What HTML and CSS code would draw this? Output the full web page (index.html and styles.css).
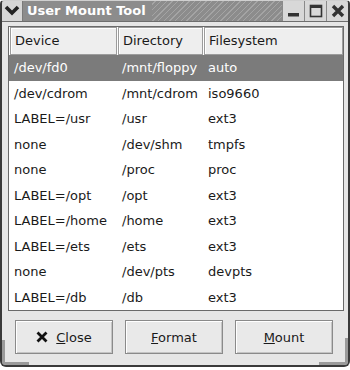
FILE: index.html
```html
<!DOCTYPE html>
<html lang="en">
    <head>
        <meta charset="UTF-8">
        <title>User Mount Tool</title>
        <link rel="stylesheet" href="styles.css">
    </head>
    <body>
        <div class="janela">
            <div class="titulo">
                <div class="menu-btn">
                    <svg width="16" height="12" viewBox="0 0 16 12"><polyline points="2,2 8,8 14,2" fill="none" stroke="#222" stroke-width="3.6"/></svg>
                </div>
                <div class="nome">User Mount Tool</div>
                <div class="listras"></div>
                <div class="tb-btn">
                    <svg width="14" height="14" viewBox="0 0 14 14"><rect x="1" y="9" width="11" height="3.5" fill="#333"/></svg>
                </div>
                <div class="tb-btn">
                    <svg width="14" height="14" viewBox="0 0 14 14"><rect x="1.5" y="1.5" width="11" height="11" fill="none" stroke="#333" stroke-width="1.6"/><rect x="1" y="1" width="12" height="3" fill="#333"/></svg>
                </div>
                <div class="tb-btn">
                    <svg width="14" height="14" viewBox="0 0 14 14"><path d="M2 2 L12 12 M12 2 L2 12" stroke="#333" stroke-width="3.4"/></svg>
                </div>
            </div>
            <div class="conteudo">
                <div class="lista">
                    <div class="cabecalho">
                        <div class="hcel">Device</div>
                        <div class="hcel">Directory</div>
                        <div class="hcel">Filesystem</div>
                    </div>
                    <div class="linha selecionada"><span>/dev/fd0</span><span>/mnt/floppy</span><span>auto</span></div>
                    <div class="linha"><span>/dev/cdrom</span><span>/mnt/cdrom</span><span>iso9660</span></div>
                    <div class="linha"><span>LABEL=/usr</span><span>/usr</span><span>ext3</span></div>
                    <div class="linha"><span>none</span><span>/dev/shm</span><span>tmpfs</span></div>
                    <div class="linha"><span>none</span><span>/proc</span><span>proc</span></div>
                    <div class="linha"><span>LABEL=/opt</span><span>/opt</span><span>ext3</span></div>
                    <div class="linha"><span>LABEL=/home</span><span>/home</span><span>ext3</span></div>
                    <div class="linha"><span>LABEL=/ets</span><span>/ets</span><span>ext3</span></div>
                    <div class="linha"><span>none</span><span>/dev/pts</span><span>devpts</span></div>
                    <div class="linha"><span>LABEL=/db</span><span>/db</span><span>ext3</span></div>
                </div>
                <div class="acoes">
                    <button class="botao">
                        <svg width="12" height="12" viewBox="0 0 12 12"><path d="M1.5 1.5 L10.5 10.5 M10.5 1.5 L1.5 10.5" stroke="#111" stroke-width="2.8"/></svg>
                        <span><u>C</u>lose</span>
                    </button>
                    <button class="botao"><span><u>F</u>ormat</span></button>
                    <button class="botao"><span><u>M</u>ount</span></button>
                </div>
            </div>
        </div>
    </body>
</html>
```

FILE: styles.css
```css
*{
    margin: 0;
    padding: 0;
    box-sizing: border-box;
}
body{
    background-color: #ffffff;
    font-family: 'DejaVu Sans', sans-serif;
    font-size: 13px;
    color: #1a1a1a;
}
.janela{
    position: relative;
    width: 350px;
    height: 367px;
    background-color: #e6e6e6;
    border: 2px solid #3a3a3a;
    border-top: 1px solid #d0d0d0;
    border-radius: 4px 4px 6px 6px;
    overflow: hidden;
}
.janela::before{
    content: "";
    position: absolute;
    left: 0;
    bottom: 0;
    width: 24px;
    height: 22px;
    border-left: 3px solid #9a9a9a;
    border-bottom: 3px solid #9a9a9a;
}
.janela::after{
    content: "";
    position: absolute;
    right: 0;
    bottom: 0;
    width: 26px;
    height: 24px;
    border-right: 3px solid #9a9a9a;
    border-bottom: 3px solid #9a9a9a;
}
.titulo{
    display: flex;
    height: 21px;
    background-color: #8c8c8c;
    border-bottom: 1px solid #6e6e6e;
}
.menu-btn{
    width: 21px;
    display: flex;
    align-items: center;
    justify-content: center;
    background-color: #d6d6d6;
    border-right: 1px solid #7a7a7a;
}
.nome{
    padding: 0 6px 0 4px;
    font-weight: bold;
    color: #ffffff;
    line-height: 20px;
}
.listras{
    flex: 1;
    background-image: repeating-linear-gradient(-45deg, #8c8c8c 0px, #8c8c8c 3px, #a4a4a4 3px, #a4a4a4 4px);
}
.tb-btn{
    width: 22px;
    display: flex;
    align-items: center;
    justify-content: center;
    background-color: #d8d8d8;
    border-left: 1px solid #8a8a8a;
}
.conteudo{
    padding: 4px 4px 0 6px;
}
.lista{
    height: 285px;
    background-color: #ffffff;
    border: 1px solid #6a6a6a;
    overflow: hidden;
}
.cabecalho,
.linha{
    display: grid;
    grid-template-columns: 108px 86px 1fr;
}
.cabecalho{
    height: 28px;
}
.hcel{
    margin-left: 1px;
    padding-left: 4px;
    line-height: 26px;
    background-color: #eeeeee;
    border: 1px solid #9c9c9c;
    box-shadow: inset 1px 1px #ffffff;
}
.linha{
    height: 25.5px;
    line-height: 25.5px;
}
.linha span{
    padding-left: 5px;
    white-space: nowrap;
}
.selecionada{
    background-color: #7b7b7b;
    color: #ffffff;
}
.acoes{
    display: flex;
    gap: 12px;
    margin-top: 9px;
    padding-left: 7px;
}
.botao{
    width: 98px;
    height: 34px;
    display: flex;
    align-items: center;
    justify-content: center;
    gap: 8px;
    font-family: 'DejaVu Sans', sans-serif;
    font-size: 13px;
    color: #1a1a1a;
    background-color: #e9e9e9;
    border: 1px solid #8a8a8a;
    box-shadow: inset 1px 1px #ffffff, inset -1px -1px #c4c4c4;
}
```
